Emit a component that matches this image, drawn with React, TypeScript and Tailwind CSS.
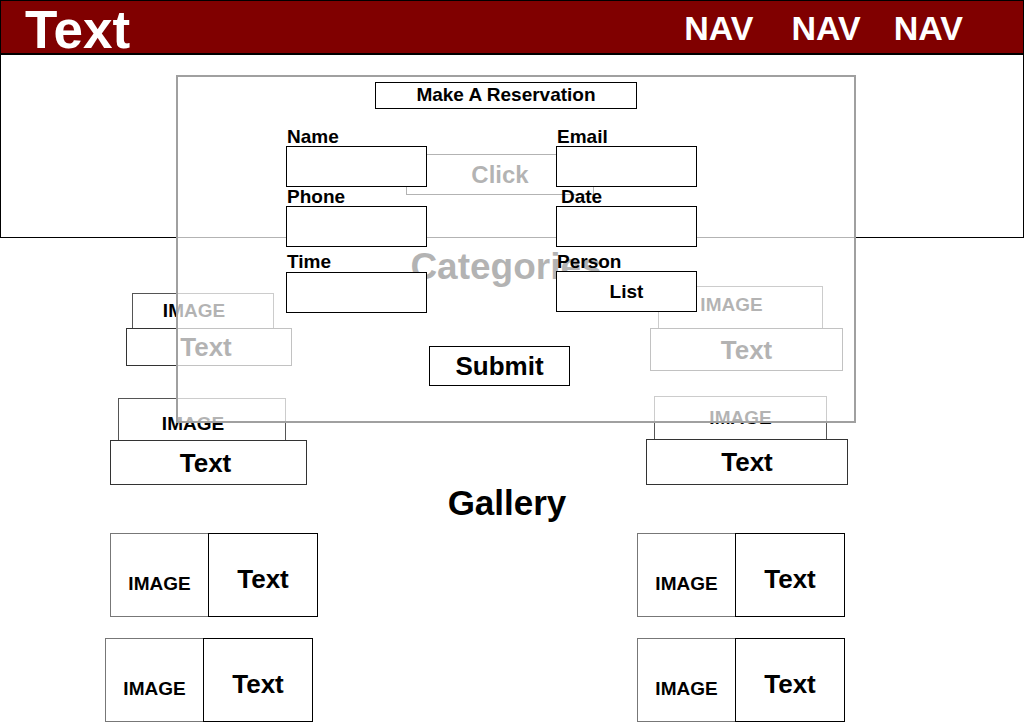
import type { ReactNode } from "react";

function CategoryCard({
  imageClass,
  textClass,
  className = "",
}: {
  imageClass: string;
  textClass: string;
  className?: string;
}) {
  return (
    <div className={`flex flex-col items-start ${className}`}>
      <div
        className={`flex items-center justify-center border border-b-0 border-[#555] text-[19px] leading-[22px] font-bold ${imageClass}`}
      >
        IMAGE
      </div>
      <div
        className={`flex items-center justify-center border border-[#333] text-[26px] leading-[30px] font-bold ${textClass}`}
      >
        Text
      </div>
    </div>
  );
}

function GalleryItem({ className }: { className: string }) {
  return (
    <div className={`flex h-[84px] ${className}`}>
      <div className="flex w-[98px] items-center justify-center border-y border-l border-[#777] pt-[18px] text-[19px] leading-[22px] font-bold">
        IMAGE
      </div>
      <div className="flex w-[110px] items-center justify-center border border-black pt-[8px] text-[26px] leading-[30px] font-bold">
        Text
      </div>
    </div>
  );
}

function Field({
  label,
  labelClass = "",
  children,
}: {
  label: string;
  labelClass?: string;
  children?: ReactNode;
}) {
  return (
    <div className="flex flex-col">
      <span className={`text-[19px] font-bold ${labelClass}`}>{label}</span>
      <div className="flex h-[41px] items-center justify-center border border-black bg-white text-[19px] font-bold">
        {children}
      </div>
    </div>
  );
}

export default function App() {
  return (
    <div className="relative flex h-[723px] w-[1024px] flex-col overflow-hidden bg-white font-['Liberation_Sans',Arial,sans-serif] text-black">
      {/* header */}
      <header className="flex h-[55px] shrink-0 items-start border border-b-2 border-black bg-[#800000] text-white">
        <span className="pl-[24px] pt-[2px] text-[53px] leading-[53px] font-bold">Text</span>
        <nav className="mr-[60px] ml-auto flex pt-[10px] text-[34px] leading-[34px] font-bold">
          <span className="mr-[38px]">NAV</span>
          <span className="mr-[33px]">NAV</span>
          <span>NAV</span>
        </nav>
      </header>

      {/* hero */}
      <section className="h-[183px] shrink-0 border-x border-b border-black pt-[99px] pl-[405px]">
        <div className="flex h-[41px] w-[188px] items-center justify-center border border-black text-[24px] font-bold">
          Click
        </div>
      </section>

      {/* categories */}
      <section className="shrink-0">
        <h2 className="mt-[10px] h-[38px] pr-[12px] text-center text-[37px] leading-[38px] font-bold">
          Categories
        </h2>
        <div className="flex">
          <div className="w-[512px] pt-[7px]">
            <CategoryCard
              imageClass="ml-[132px] w-[142px] h-[35px] pr-[18px]"
              textClass="ml-[126px] w-[166px] h-[38px] pr-[6px]"
            />
            <CategoryCard
              className="mt-[32px]"
              imageClass="ml-[118px] w-[168px] h-[42px] pt-[8px] pr-[18px]"
              textClass="ml-[110px] w-[197px] h-[45px] pr-[6px]"
            />
          </div>
          <div className="flex-1">
            <CategoryCard
              imageClass="ml-[146px] w-[165px] h-[42px] pb-[6px] pr-[18px]"
              textClass="ml-[138px] w-[193px] h-[43px]"
            />
            <CategoryCard
              className="mt-[25px]"
              imageClass="ml-[142px] w-[173px] h-[43px]"
              textClass="ml-[134px] w-[202px] h-[46px]"
            />
          </div>
        </div>
      </section>

      {/* gallery */}
      <section className="shrink-0">
        <h2 className="mt-[-2px] h-[40px] pr-[10px] text-center text-[35px] leading-[40px] font-bold">
          Gallery
        </h2>
        <div className="mt-[10px] flex">
          <GalleryItem className="ml-[110px]" />
          <GalleryItem className="ml-[319px]" />
        </div>
        <div className="mt-[21px] flex">
          <GalleryItem className="ml-[105px]" />
          <GalleryItem className="ml-[324px]" />
        </div>
      </section>

      {/* reservation modal */}
      <div className="absolute top-[75px] left-[176px] h-[348px] w-[680px] border-2 border-[#a0a0a0] bg-white/70">
        <div className="mt-[5px] ml-[197px] flex h-[27px] w-[262px] items-center justify-center border border-black bg-white text-[19px] font-bold">
          Make A Reservation
        </div>
        <div className="mt-[18px] ml-[108px] grid w-[411px] grid-cols-[141px_141px] gap-x-[129px] leading-[19px]">
          <Field label="Name" labelClass="pl-[1px] h-[19px]" />
          <Field label="Email" labelClass="pl-[1px] h-[19px]" />
          <Field label="Phone" labelClass="pl-[1px] h-[19px]" />
          <Field label="Date" labelClass="pl-[5px] h-[19px]" />
          <Field label="Time" labelClass="pl-[1px] mt-[4px] h-[21px] leading-[21px]" />
          <Field label="Person" labelClass="pl-[1px] mt-[4px] h-[20px] leading-[21px]">
            List
          </Field>
        </div>
        <div className="mt-[33px] ml-[251px] flex h-[40px] w-[141px] items-center justify-center border border-black bg-white text-[26px] font-bold">
          Submit
        </div>
      </div>
    </div>
  );
}
